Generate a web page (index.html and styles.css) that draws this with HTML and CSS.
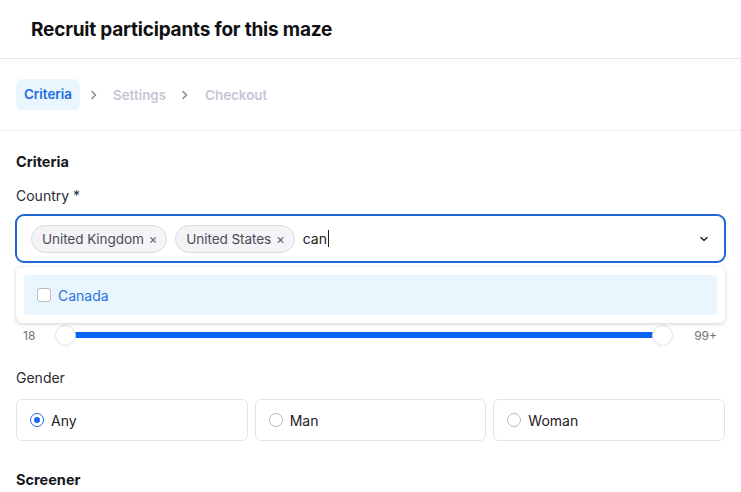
FILE: index.html
```html
<!DOCTYPE html>
<html>
<head>
<meta charset="utf-8">
<link rel="stylesheet" href="styles.css">
</head>
<body>
<header class="header">
  <h1 class="title">Recruit participants for this maze</h1>
</header>
<nav class="steps">
  <span class="step active">Criteria</span>
  <svg class="chev" width="8" height="10" viewBox="0 0 8 10"><path d="M2 1.5 L5.5 5 L2 8.5" fill="none" stroke="#8a8d99" stroke-width="1.6" stroke-linecap="round" stroke-linejoin="round"/></svg>
  <span class="step">Settings</span>
  <svg class="chev" width="8" height="10" viewBox="0 0 8 10"><path d="M2 1.5 L5.5 5 L2 8.5" fill="none" stroke="#8a8d99" stroke-width="1.6" stroke-linecap="round" stroke-linejoin="round"/></svg>
  <span class="step">Checkout</span>
</nav>
<main class="content">
  <h2 class="section">Criteria</h2>
  <div class="label">Country *</div>
  <div class="field-wrap">
    <div class="select">
      <span class="chip">United Kingdom <span class="x">×</span></span>
      <span class="chip">United States <span class="x">×</span></span>
      <span class="typed">can<span class="caret"></span></span>
      <svg class="dd" width="10" height="8" viewBox="0 0 10 8"><path d="M2 2.5 L5 5.5 L8 2.5" fill="none" stroke="#2b2d33" stroke-width="1.5" stroke-linecap="round" stroke-linejoin="round"/></svg>
    </div>
    <div class="menu">
      <div class="option">
        <span class="checkbox"></span>
        <span class="opt-text">Canada</span>
      </div>
    </div>
  </div>
  <div class="label age-label">Age</div>
  <div class="slider-row">
    <span class="num">18</span>
    <div class="slider">
      <div class="track"></div>
      <span class="thumb left"></span>
      <span class="thumb right"></span>
    </div>
    <span class="num">99+</span>
  </div>
  <div class="label gender-label">Gender</div>
  <div class="radios">
    <label class="radio-card"><span class="radio on"></span>Any</label>
    <label class="radio-card"><span class="radio"></span>Man</label>
    <label class="radio-card"><span class="radio"></span>Woman</label>
  </div>
  <h2 class="section screener">Screener</h2>
</main>
</body>
</html>
```

FILE: styles.css
```css
* { box-sizing: border-box; }
html, body { margin: 0; padding: 0; background: #fff; }
body {
  font-family: Inter, "Noto Sans", "Liberation Sans", sans-serif;
  color: #1d1e22;
  width: 741px;
  height: 492px;
  overflow: hidden;
}
.header {
  height: 59px;
  border-bottom: 1px solid #e6e6e8;
  display: flex;
  align-items: center;
  padding-left: 31px;
}
.title {
  margin: 0;
  font-size: 19px;
  font-weight: 700;
  letter-spacing: -0.2px;
  color: #111;
}
.steps {
  height: 72px;
  border-bottom: 1px solid #eeeef0;
  display: flex;
  align-items: center;
  padding-left: 16px;
  gap: 0;
}
.step {
  font-size: 13.4px;
  font-weight: 600;
  color: #c4c6d3;
}
.step.active {
  background: #eaf6fe;
  color: #1a6be4;
  border-radius: 6px;
  padding: 7px 8px 8px;
}
.chev { margin: 0 15px 0 10px; }
.chev:nth-of-type(2) { margin: 0 16px 0 15px; }
.content { padding: 21px 16px 0 16px; }
.section {
  margin: 0;
  font-size: 14.5px;
  font-weight: 700;
  line-height: 20px;
  color: #16171a;
}
.label {
  font-size: 14px;
  line-height: 20px;
  color: #2a2b30;
  margin-top: 14px;
}
.field-wrap { position: relative; margin-top: 8px; }
.select {
  height: 49px;
  margin-left: -1px;
  margin-right: -1px;
  border: 2px solid #1f66d6;
  border-radius: 9px;
  display: flex;
  align-items: center;
  padding-left: 14px;
  padding-right: 15px;
  gap: 8px;
}
.chip {
  display: inline-flex;
  align-items: center;
  height: 28px;
  padding: 0 9px 0 10px;
  border: 1px solid #dcdde2;
  background: #f4f4f6;
  border-radius: 14px;
  font-size: 13.6px;
  letter-spacing: -0.1px;
  color: #4a4c58;
  gap: 5px;
}
.x { font-size: 13px; color: #5c5e6a; }
.typed { font-size: 14px; color: #222; display: inline-flex; align-items: center; }
.caret { width: 1px; height: 17px; background: #222; margin-left: 1px; }
.dd { margin-left: auto; }
.menu {
  position: absolute;
  left: 0;
  right: 0;
  top: 53px;
  background: #fff;
  border-radius: 6px;
  box-shadow: 0 1px 4px rgba(0,0,0,0.18);
  padding: 8px;
  z-index: 2;
}
.option {
  height: 40px;
  background: #eaf6fe;
  border-radius: 3px;
  display: flex;
  align-items: center;
  padding-left: 13px;
  gap: 7px;
}
.checkbox {
  width: 14px;
  height: 14px;
  border: 1px solid #b8bac2;
  border-radius: 3px;
  background: #fff;
}
.opt-text { font-size: 14px; color: #2a74dc; }
.age-label { margin-top: 41px; }
.slider-row {
  display: flex;
  align-items: center;
  height: 22px;
  margin-top: 0;
  padding: 0 8px 0 7px;
}
.num { font-size: 12px; color: #70727c; }
.slider {
  position: relative;
  flex: 1;
  height: 22px;
  margin: 0 21px 0 20px;
  display: flex;
  align-items: center;
}
.track {
  height: 6px;
  width: 100%;
  background: #0b63f3;
  border-radius: 1px;
  margin: 0 19px;
}
.thumb {
  position: absolute;
  top: 1px;
  width: 21px;
  height: 21px;
  border-radius: 50%;
  background: #fff;
  border: 1px solid #e2e3e7;
}
.thumb.left { left: 0; }
.thumb.right { right: 0; }
.gender-label { margin-top: 22px; }
.radios {
  display: grid;
  grid-template-columns: 1fr 1fr 1fr;
  gap: 7px;
  margin-top: 11px;
}
.radio-card {
  height: 42px;
  border: 1px solid #e4e5e8;
  border-radius: 6px;
  display: flex;
  align-items: center;
  padding-left: 13px;
  gap: 7px;
  font-size: 14px;
  color: #1f2024;
}
.radio {
  width: 14px;
  height: 14px;
  border-radius: 50%;
  border: 1px solid #b5b7bf;
  background: #fff;
  position: relative;
}
.radio.on { border-color: #1a6be4; }
.radio.on::after {
  content: "";
  position: absolute;
  left: 3px;
  top: 3px;
  width: 6px;
  height: 6px;
  border-radius: 50%;
  background: #1a6be4;
}
.screener { margin-top: 29px; }
```
